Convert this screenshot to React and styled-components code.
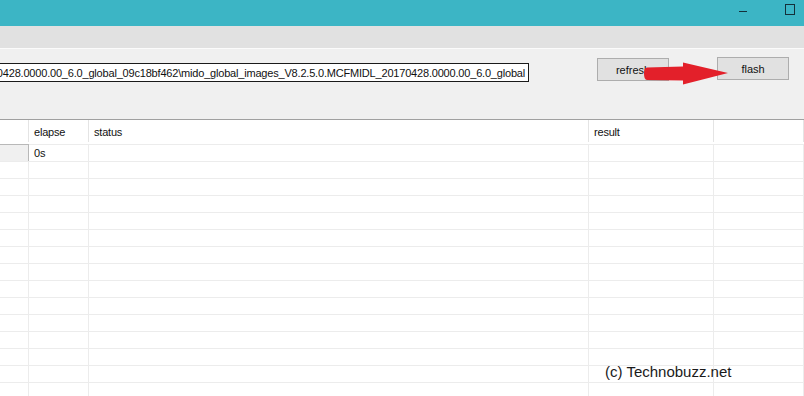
import React from "react";
import styled, { createGlobalStyle } from "styled-components";

const GlobalStyle = createGlobalStyle`
  html, body {
    margin: 0;
    padding: 0;
  }
  body {
    width: 804px;
    height: 396px;
    overflow: hidden;
    background: #ffffff;
    font-family: "Liberation Sans", Arial, sans-serif;
  }
`;

const Window = styled.div`
  position: relative;
  width: 804px;
  height: 396px;
  display: flex;
  flex-direction: column;
  overflow: hidden;
`;

const TitleBar = styled.div`
  height: 26px;
  background: #3cb5c5;
  display: flex;
  align-items: center;
  justify-content: flex-end;
  gap: 38px;
  padding-right: 9px;
  flex-shrink: 0;
`;

const MinGlyph = styled.span`
  width: 8px;
  height: 1px;
  margin-top: -4px;
  background: #14303a;
`;

const MaxGlyph = styled.span`
  width: 8px;
  height: 9px;
  margin-top: -7px;
  border: 1px solid #14303a;
`;

const MenuStrip = styled.div`
  height: 22px;
  background: #e1e1e1;
  border-bottom: 1px solid #fbfbfb;
  flex-shrink: 0;
`;

const Panel = styled.div`
  height: 70px;
  background: #f0f0f0;
  border-bottom: 1px solid #a0a0a0;
  display: flex;
  align-items: flex-start;
  flex-shrink: 0;
  position: relative;
`;

const PathBox = styled.div`
  width: 529px;
  height: 19px;
  margin-top: 14px;
  background: #ffffff;
  border: 1px solid #1a1a1a;
  border-left: none;
  display: flex;
  justify-content: flex-end;
  align-items: center;
  padding-right: 3px;
  box-sizing: border-box;
  overflow: hidden;
  white-space: nowrap;
  font-size: 11px;
  letter-spacing: -0.19px;
  color: #111;
`;

const Buttons = styled.div`
  display: flex;
  align-items: flex-start;
  gap: 48px;
  margin-left: 68px;
  margin-top: 8px;
`;

const Button = styled.div`
  width: 72px;
  height: 23px;
  margin-top: ${(p) => p.$offset || 0}px;
  box-sizing: border-box;
  background: #e1e1e1;
  border: 1px solid #adadad;
  display: flex;
  align-items: center;
  justify-content: center;
  font-size: 11px;
  color: #111;
`;

const Arrow = styled.svg`
  position: absolute;
  left: 643px;
  top: 13px;
`;

const Grid = styled.div`
  flex: 1;
  display: grid;
  grid-template-columns: 29px 60px 500px 125px 1fr;
  grid-auto-rows: 17px;
  grid-template-rows: 24px;
  font-size: 11px;
  letter-spacing: -0.2px;
  color: #111;
`;

const HeadCell = styled.div`
  background: #ffffff;
  padding-left: 5px;
  padding-top: 6px;
  box-sizing: border-box;
  position: relative;
  &:not(:last-child)::after {
    content: "";
    position: absolute;
    right: 0;
    top: 0;
    height: 22px;
    width: 1px;
    background: #e4e4e4;
  }
`;

const Cell = styled.div`
  background: ${(p) => (p.$head ? "#f0f0f0" : "#ffffff")};
  border-right: 1px solid ${(p) => (p.$head ? "#b8b8b8" : "#ececec")};
  border-top: 1px solid ${(p) => (p.$head ? "#b8b8b8" : "#ececec")};
  padding-left: 5px;
  padding-top: 1px;
  box-sizing: border-box;
  display: flex;
  align-items: center;
  line-height: 1;
`;

const Watermark = styled.div`
  position: absolute;
  left: 605px;
  top: 363px;
  font-size: 15px;
  color: #1a1a1a;
`;

const columns = ["", "elapse", "status", "result", ""];
const rows = Array.from({ length: 15 }, (_, i) => (i === 0 ? ["", "0s", "", "", ""] : ["", "", "", "", ""]));

export default function App() {
  return (
    <>
      <GlobalStyle />
      <Window>
        <TitleBar>
          <MinGlyph />
          <MaxGlyph />
        </TitleBar>
        <MenuStrip />
        <Panel>
          <PathBox>
            20170428.0000.00_6.0_global_09c18bf462\mido_global_images_V8.2.5.0.MCFMIDL_20170428.0000.00_6.0_global
          </PathBox>
          <Buttons>
            <Button $offset={1}>refresh</Button>
            <Button>flash</Button>
          </Buttons>
          <Arrow width="86" height="24" viewBox="0 0 86 24">
            <path
              d="M4 5.5 L40 4.5 L40 0.5 L85 11 L40 22.5 L40 18.5 L4 18 Q1 18 1 11.5 Q1 5.5 4 5.5 Z"
              fill="#e3202a"
            />
          </Arrow>
        </Panel>
        <Grid>
          {columns.map((c, i) => (
            <HeadCell key={"h" + i}>{c}</HeadCell>
          ))}
          {rows.map((r, ri) =>
            r.map((v, ci) => (
              <Cell key={ri + "-" + ci} $head={ri === 0 && ci === 0}>
                {v}
              </Cell>
            ))
          )}
        </Grid>
        <Watermark>(c) Technobuzz.net</Watermark>
      </Window>
    </>
  );
}
